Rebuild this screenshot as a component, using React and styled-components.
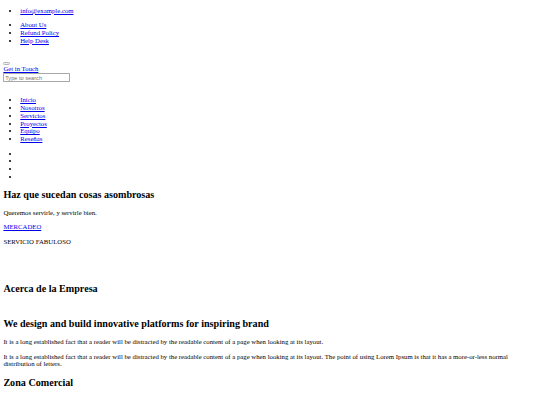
import React from 'react';
import styled, { createGlobalStyle } from 'styled-components';

const GlobalStyle = createGlobalStyle`
  html, body {
    margin: 0;
    padding: 0;
    background: #ffffff;
  }
`;

// the whole page is the plain document, shown shrunk down (1280 -> 540)
const Page = styled.div`
  zoom: 0.421875;
  padding: 0 8px 8px;
  font-family: "Liberation Serif", "Times New Roman", serif;
  font-size: 16px;
  line-height: 1.15;
  color: #000000;
  overflow: hidden;
`;

const List = styled.ul`
  margin: ${(p) => p.$top || 16}px 0 16px;
  padding-left: 40px;
  list-style: disc;
`;

const Item = styled.li`
  min-height: 18.4px;
`;

const Link = styled.a`
  color: #0000ee;
  text-decoration: underline;
  display: ${(p) => (p.$block ? 'block' : 'inline')};
`;

const Header = styled.div`
  margin-top: 31px;
`;

const MenuButton = styled.button`
  padding: 1px 6px;
  border: 2px solid #b5b5b5;
  border-radius: 3px;
  background: #efefef;
  vertical-align: baseline;
`;

const SearchInput = styled.input`
  display: block;
  width: 149px;
  font-family: "Liberation Sans", Arial, sans-serif;
  font-size: 13.333px;
  line-height: normal;
  padding: 1px 2px;
  border: 2px solid #a8a8a8;
  border-radius: 2px;
  &::placeholder {
    color: #757575;
  }
`;

const Heading = styled.h2`
  font-size: 24px;
  font-weight: bold;
  margin: ${(p) => p.$top || 19.92}px 0 19.92px;
`;

const Text = styled.p`
  margin: 16px 0;
`;

const quickLinks = ['About Us', 'Refund Policy', 'Help Desk'];
const menu = ['Inicio', 'Nosotros', 'Servicios', 'Proyectos', 'Equipo', 'Reseñas'];

export default function App() {
  return (
    <Page>
      <GlobalStyle />
      <List>
        <Item><Link href="#">info@example.com</Link></Item>
      </List>
      <List>
        {quickLinks.map((q) => (
          <Item key={q}><Link href="#">{q}</Link></Item>
        ))}
      </List>

      <Header>
        <MenuButton type="button" />
        <Link $block href="#">Get in Touch</Link>
        <SearchInput type="text" placeholder="Type to search" />
      </Header>

      <List $top={34}>
        {menu.map((m) => (
          <Item key={m}><Link href="#">{m}</Link></Item>
        ))}
      </List>
      <List>
        <Item />
        <Item />
        <Item />
        <Item />
      </List>

      <Heading>Haz que sucedan cosas asombrosas</Heading>
      <Text>Queremos servirle, y servirle bien.</Text>
      <Text><Link href="#">MERCADEO</Link></Text>
      <Text>SERVICIO FABULOSO</Text>

      <Heading $top={88}>Acerca de la Empresa</Heading>
      <Heading $top={56}>We design and build innovative platforms for inspiring brand</Heading>
      <Text>It is a long established fact that a reader will be distracted by the readable content of a page when looking at its layout.</Text>
      <Text>It is a long established fact that a reader will be distracted by the readable content of a page when looking at its layout. The point of using Lorem Ipsum is that it has a more-or-less normal distribution of letters.</Text>
      <Heading>Zona Comercial</Heading>
    </Page>
  );
}
